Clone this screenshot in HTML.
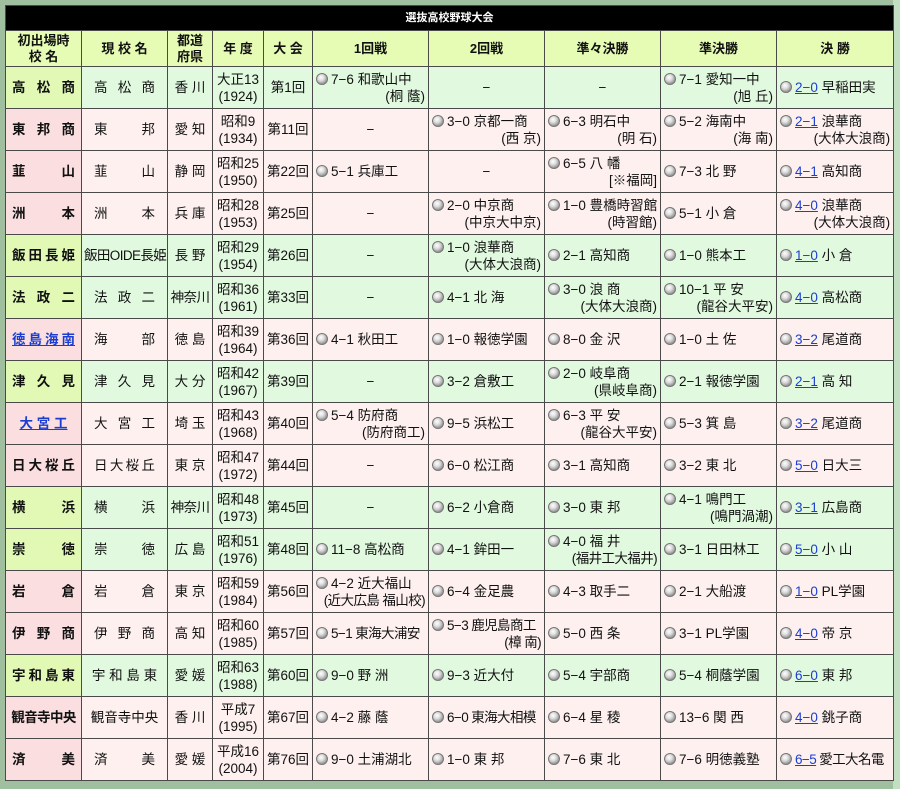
<!DOCTYPE html>
<html><head><meta charset="utf-8">
<style>
html,body{margin:0;padding:0;}
body{width:900px;height:789px;background:#9fbf9f;position:relative;overflow:hidden;font-family:"Liberation Sans","Noto Sans CJK JP",sans-serif;color:#111;}
.strip{position:absolute;left:893px;top:0;width:7px;height:789px;background:#c4dec4;}
table{position:absolute;left:5px;top:5px;border-collapse:collapse;table-layout:fixed;width:888px;}
td,th{border:1px solid #4a4a4a;padding:0;font-size:13.5px;line-height:17px;overflow:hidden;white-space:nowrap;}
.title td{background:#000;color:#fff;height:24px;text-align:center;font-weight:bold;font-size:11px;}
.hd th{background:#e6fbb4;height:35px;text-align:center;font-weight:bold;font-size:13px;line-height:16px;}
tr.r td{height:41px;}
tr.g td{background:#e1f9df;}
tr.g td.c1{background:#e2f9b6;}
tr.p td{background:#fdf0ef;}
tr.p td.c1{background:#fbdfe0;}
td.c1{font-weight:bold;text-align:justify;text-align-last:justify;padding:0 6px;}
td.c2{text-align:justify;text-align-last:justify;padding:0 12px;}
td.n{text-align:center;text-align-last:center;padding:0 2px;}
td.c{text-align:center;}
td.m{padding:0 3px 0 3px;}
.m .b{text-align:right;}
i{display:inline-block;width:12px;height:12px;border-radius:50%;background:radial-gradient(circle at 40% 35%,#fff 0,#ddd 35%,#888 80%,#666 100%);vertical-align:-1px;margin-right:3px;border:0.5px solid #777;box-sizing:border-box;}
a{color:#1a3fd0;text-decoration:underline;}
td.dash{text-align:center;}
.sm{letter-spacing:-0.6px;}
</style></head><body>
<div class="strip"></div>
<table>
<colgroup><col style="width:76px"><col style="width:86px"><col style="width:45px"><col style="width:51px"><col style="width:49px"><col style="width:116px"><col style="width:116px"><col style="width:116px"><col style="width:116px"><col style="width:117px"></colgroup>
<tr class="title"><td colspan="10">選抜高校野球大会</td></tr>
<tr class="hd"><th>初出場時<br>校 名</th><th>現 校 名</th><th>都道<br>府県</th><th>年 度</th><th>大 会</th><th>1回戦</th><th>2回戦</th><th>準々決勝</th><th>準決勝</th><th>決 勝</th></tr>

<tr class="r g"><td class="c1">高松商</td><td class="c2">高松商</td><td class="c">香 川</td><td class="c">大正13<br>(1924)</td><td class="c">第1回</td><td class="m"><i></i>7−6 和歌山中<div class="b">(桐 蔭)</div></td><td class="dash">−</td><td class="dash">−</td><td class="m"><i></i>7−1 愛知一中<div class="b">(旭 丘)</div></td><td class="m"><i></i><a>2−0</a> 早稲田実</td></tr>

<tr class="r p"><td class="c1">東邦商</td><td class="c2">東邦</td><td class="c">愛 知</td><td class="c">昭和9<br>(1934)</td><td class="c">第11回</td><td class="dash">−</td><td class="m"><i></i>3−0 京都一商<div class="b">(西 京)</div></td><td class="m"><i></i>6−3 明石中<div class="b">(明 石)</div></td><td class="m"><i></i>5−2 海南中<div class="b">(海 南)</div></td><td class="m"><i></i><a>2−1</a> 浪華商<div class="b">(大体大浪商)</div></td></tr>

<tr class="r p"><td class="c1">韮山</td><td class="c2">韮山</td><td class="c">静 岡</td><td class="c">昭和25<br>(1950)</td><td class="c">第22回</td><td class="m"><i></i>5−1 兵庫工</td><td class="dash">−</td><td class="m"><i></i>6−5 八 幡<div class="b">[※福岡]</div></td><td class="m"><i></i>7−3 北 野</td><td class="m"><i></i><a>4−1</a> 高知商</td></tr>

<tr class="r p"><td class="c1">洲本</td><td class="c2">洲本</td><td class="c">兵 庫</td><td class="c">昭和28<br>(1953)</td><td class="c">第25回</td><td class="dash">−</td><td class="m"><i></i>2−0 中京商<div class="b">(中京大中京)</div></td><td class="m"><i></i>1−0 豊橋時習館<div class="b">(時習館)</div></td><td class="m"><i></i>5−1 小 倉</td><td class="m"><i></i><a>4−0</a> 浪華商<div class="b">(大体大浪商)</div></td></tr>

<tr class="r g"><td class="c1">飯田長姫</td><td class="c2 n sm">飯田OIDE長姫</td><td class="c">長 野</td><td class="c">昭和29<br>(1954)</td><td class="c">第26回</td><td class="dash">−</td><td class="m"><i></i>1−0 浪華商<div class="b">(大体大浪商)</div></td><td class="m"><i></i>2−1 高知商</td><td class="m"><i></i>1−0 熊本工</td><td class="m"><i></i><a>1−0</a> 小 倉</td></tr>

<tr class="r g"><td class="c1">法政二</td><td class="c2">法政二</td><td class="c sm">神奈川</td><td class="c">昭和36<br>(1961)</td><td class="c">第33回</td><td class="dash">−</td><td class="m"><i></i>4−1 北 海</td><td class="m"><i></i>3−0 浪 商<div class="b">(大体大浪商)</div></td><td class="m"><i></i>10−1 平 安<div class="b">(龍谷大平安)</div></td><td class="m"><i></i><a>4−0</a> 高松商</td></tr>

<tr class="r p"><td class="c1"><a>徳島海南</a></td><td class="c2">海部</td><td class="c">徳 島</td><td class="c">昭和39<br>(1964)</td><td class="c">第36回</td><td class="m"><i></i>4−1 秋田工</td><td class="m"><i></i>1−0 報徳学園</td><td class="m"><i></i>8−0 金 沢</td><td class="m"><i></i>1−0 土 佐</td><td class="m"><i></i><a>3−2</a> 尾道商</td></tr>

<tr class="r g"><td class="c1">津久見</td><td class="c2">津久見</td><td class="c">大 分</td><td class="c">昭和42<br>(1967)</td><td class="c">第39回</td><td class="dash">−</td><td class="m"><i></i>3−2 倉敷工</td><td class="m"><i></i>2−0 岐阜商<div class="b">(県岐阜商)</div></td><td class="m"><i></i>2−1 報徳学園</td><td class="m"><i></i><a>2−1</a> 高 知</td></tr>

<tr class="r p"><td class="c1 n"><a>大 宮 工</a></td><td class="c2">大宮工</td><td class="c">埼 玉</td><td class="c">昭和43<br>(1968)</td><td class="c">第40回</td><td class="m"><i></i>5−4 防府商<div class="b">(防府商工)</div></td><td class="m"><i></i>9−5 浜松工</td><td class="m"><i></i>6−3 平 安<div class="b">(龍谷大平安)</div></td><td class="m"><i></i>5−3 箕 島</td><td class="m"><i></i><a>3−2</a> 尾道商</td></tr>

<tr class="r p"><td class="c1">日大桜丘</td><td class="c2">日大桜丘</td><td class="c">東 京</td><td class="c">昭和47<br>(1972)</td><td class="c">第44回</td><td class="dash">−</td><td class="m"><i></i>6−0 松江商</td><td class="m"><i></i>3−1 高知商</td><td class="m"><i></i>3−2 東 北</td><td class="m"><i></i><a>5−0</a> 日大三</td></tr>

<tr class="r g"><td class="c1">横浜</td><td class="c2">横浜</td><td class="c sm">神奈川</td><td class="c">昭和48<br>(1973)</td><td class="c">第45回</td><td class="dash">−</td><td class="m"><i></i>6−2 小倉商</td><td class="m"><i></i>3−0 東 邦</td><td class="m"><i></i>4−1 鳴門工<div class="b">(鳴門渦潮)</div></td><td class="m"><i></i><a>3−1</a> 広島商</td></tr>

<tr class="r g"><td class="c1">崇徳</td><td class="c2">崇徳</td><td class="c">広 島</td><td class="c">昭和51<br>(1976)</td><td class="c">第48回</td><td class="m"><i></i>11−8 高松商</td><td class="m"><i></i>4−1 鉾田一</td><td class="m"><i></i>4−0 福 井<div class="b sm">(福井工大福井)</div></td><td class="m"><i></i>3−1 日田林工</td><td class="m"><i></i><a>5−0</a> 小 山</td></tr>

<tr class="r p"><td class="c1">岩倉</td><td class="c2">岩倉</td><td class="c">東 京</td><td class="c">昭和59<br>(1984)</td><td class="c">第56回</td><td class="m"><i></i>4−2 近大福山<div class="b sm">(近大広島 福山校)</div></td><td class="m"><i></i>6−4 金足農</td><td class="m"><i></i>4−3 取手二</td><td class="m"><i></i>2−1 大船渡</td><td class="m"><i></i><a>1−0</a> PL学園</td></tr>

<tr class="r p"><td class="c1">伊野商</td><td class="c2">伊野商</td><td class="c">高 知</td><td class="c">昭和60<br>(1985)</td><td class="c">第57回</td><td class="m sm"><i></i>5−1 東海大浦安</td><td class="m sm"><i></i>5−3 鹿児島商工<div class="b">(樟 南)</div></td><td class="m"><i></i>5−0 西 条</td><td class="m"><i></i>3−1 PL学園</td><td class="m"><i></i><a>4−0</a> 帝 京</td></tr>

<tr class="r g"><td class="c1">宇和島東</td><td class="c n">宇 和 島 東</td><td class="c">愛 媛</td><td class="c">昭和63<br>(1988)</td><td class="c">第60回</td><td class="m"><i></i>9−0 野 洲</td><td class="m"><i></i>9−3 近大付</td><td class="m"><i></i>5−4 宇部商</td><td class="m"><i></i>5−4 桐蔭学園</td><td class="m"><i></i><a>6−0</a> 東 邦</td></tr>

<tr class="r p"><td class="c1 n sm">観音寺中央</td><td class="c2 n">観音寺中央</td><td class="c">香 川</td><td class="c">平成7<br>(1995)</td><td class="c">第67回</td><td class="m"><i></i>4−2 藤 蔭</td><td class="m sm"><i></i>6−0 東海大相模</td><td class="m"><i></i>6−4 星 稜</td><td class="m"><i></i>13−6 関 西</td><td class="m"><i></i><a>4−0</a> 銚子商</td></tr>

<tr class="r p"><td class="c1">済美</td><td class="c2">済美</td><td class="c">愛 媛</td><td class="c">平成16<br>(2004)</td><td class="c">第76回</td><td class="m"><i></i>9−0 土浦湖北</td><td class="m"><i></i>1−0 東 邦</td><td class="m"><i></i>7−6 東 北</td><td class="m"><i></i>7−6 明徳義塾</td><td class="m sm"><i></i><a>6−5</a> 愛工大名電</td></tr>
</table>
</body></html>
